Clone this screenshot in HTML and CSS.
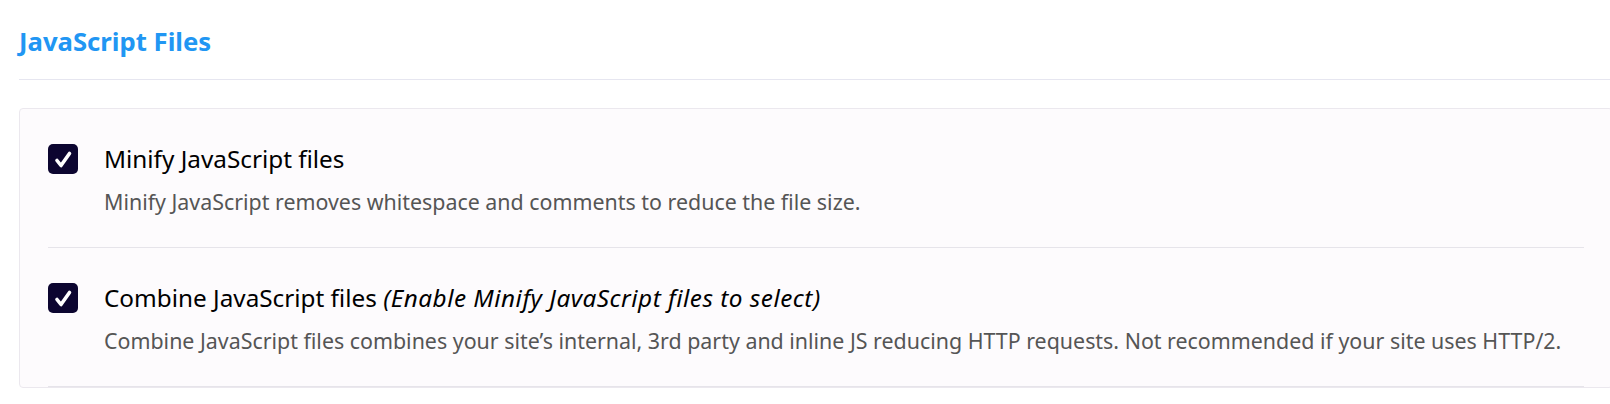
FILE: index.html
```html
<!DOCTYPE html>
<html lang="en">
<head>
    <meta charset="UTF-8">
    <meta name="viewport" content="width=device-width, initial-scale=1.0">
    <title>JavaScript Files</title>
    <link rel="stylesheet" href="styles.css">
</head>
<body>

    <div class="settings">
        <div class="section-header">
            <h2>JavaScript Files</h2>
        </div>

        <div class="panel">
            <div class="option">
                <div class="option-row">
                    <span class="checkbox">
                        <svg viewBox="0 0 30 30" width="30" height="30"><path d="M9 16.5 L13 21.5 L21.5 9.5" fill="none" stroke="#fff" stroke-width="3.6" stroke-linecap="round" stroke-linejoin="round"/></svg>
                    </span>
                    <div class="option-text">
                        <div class="option-title">Minify JavaScript files</div>
                        <div class="option-desc">Minify JavaScript removes whitespace and comments to reduce the file size.</div>
                    </div>
                </div>
            </div>

            <div class="option">
                <div class="option-row">
                    <span class="checkbox">
                        <svg viewBox="0 0 30 30" width="30" height="30"><path d="M9 16.5 L13 21.5 L21.5 9.5" fill="none" stroke="#fff" stroke-width="3.6" stroke-linecap="round" stroke-linejoin="round"/></svg>
                    </span>
                    <div class="option-text">
                        <div class="option-title">Combine JavaScript files <em>(Enable Minify JavaScript files to select)</em></div>
                        <div class="option-desc">Combine JavaScript files combines your site’s internal, 3rd party and inline JS reducing HTTP requests. Not recommended if your site uses HTTP/2.</div>
                    </div>
                </div>
            </div>
        </div>
    </div>

</body>
</html>
```

FILE: styles.css
```css
html {
    overflow: hidden;
}

body {
    font-family: "Noto Sans", "Open Sans", sans-serif;
    background-color: #ffffff;
    margin: 0;
    padding: 0;
}

.settings {
    width: 1594px;
    margin-left: 19px;
}

.section-header {
    height: 80px;
    border-bottom: 1px solid #e6e6f0;
    box-sizing: border-box;
    padding-top: 26px;
}

.section-header h2 {
    margin: 0;
    font-size: 25.7px;
    font-weight: 700;
    color: #2196f3;
    line-height: 32px;
}

.panel {
    margin-top: 28px;
    background-color: #fdfbfd;
    border: 1px solid #ebe8ee;
    border-radius: 4px;
    padding: 0 28px;
}

.option {
    border-bottom: 1px solid #e6e4ea;
    padding: 35px 0 0;
    height: 139px;
    box-sizing: border-box;
}

.option-row {
    display: flex;
    align-items: flex-start;
    gap: 26px;
}

.checkbox {
    flex: none;
    width: 30px;
    height: 30px;
    border-radius: 5px;
    background-color: #0c0530;
    display: flex;
}

.option-title {
    font-size: 24.3px;
    color: #000;
    line-height: 30px;
}

.option-title em {
    font-style: italic;
    letter-spacing: 0.5px;
}

.option-desc {
    margin-top: 15px;
    font-size: 21.4px;
    color: #555;
    line-height: 26px;
}
```
